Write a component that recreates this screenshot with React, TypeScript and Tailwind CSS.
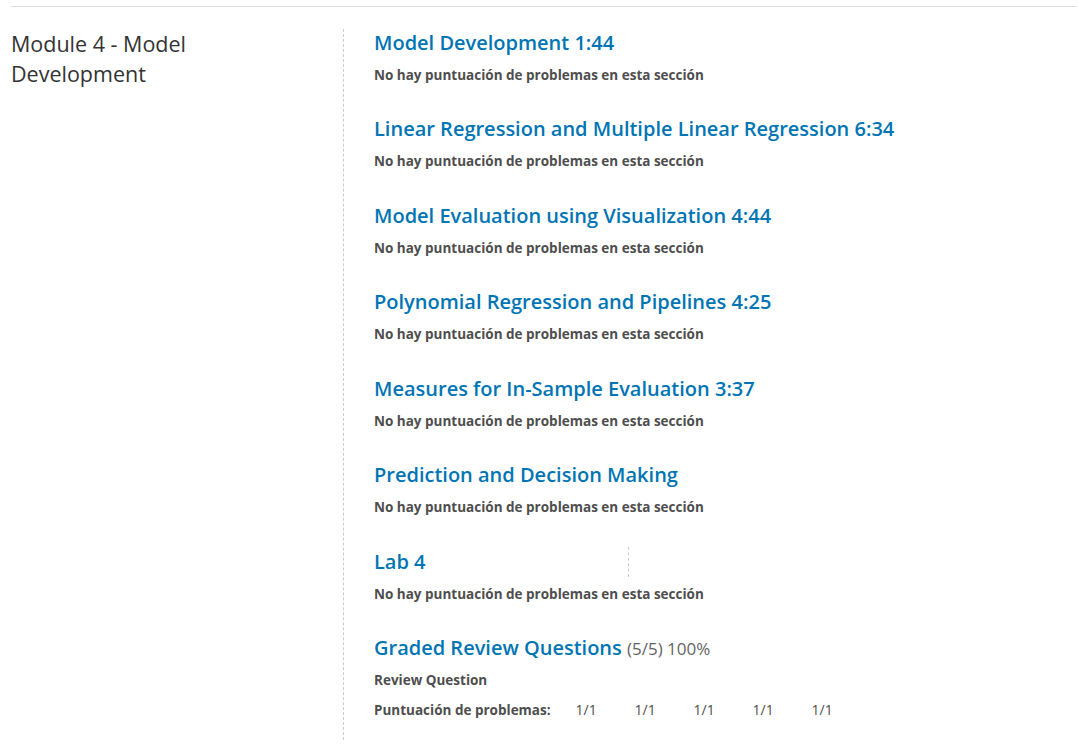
const sections = [
  "Model Development 1:44",
  "Linear Regression and Multiple Linear Regression 6:34",
  "Model Evaluation using Visualization 4:44",
  "Polynomial Regression and Pipelines 4:25",
  "Measures for In-Sample Evaluation 3:37",
  "Prediction and Decision Making",
];

const NoScore = () => (
  <p className="mt-[7px] text-[13.5px] leading-[20px] font-bold text-[#4e4e4e]">
    No hay puntuación de problemas en esta sección
  </p>
);

export default function App() {
  return (
    <div className="min-h-[744px] bg-white font-['Open_Sans',sans-serif]">
      <div className="ml-[11px] mr-[1px] pt-[6px]">
        <div className="flex border-t border-[#dddddd]">
          <div className="w-[332px] shrink-0 pt-[22px]">
            <h2 className="text-[21.5px] leading-[30px] font-normal text-[#333333]">
              Module 4 - Model
              <br />
              Development
            </h2>
          </div>
          <div className="mt-[22px] flex-1 border-l border-dashed border-[#cccccc] pl-[30px]">
            <ol className="-mt-[1px]">
              {sections.map((s) => (
                <li key={s} className="pb-[29.45px]">
                  <h3 className="text-[20px] leading-[30px] font-semibold text-[#0075b4]">{s}</h3>
                  <NoScore />
                </li>
              ))}
              <li className="pb-[29.3px]">
                <div className="flex items-center">
                  <h3 className="w-[255px] border-r border-dashed border-[#cccccc] text-[20px] leading-[30px] font-semibold text-[#0075b4]">
                    Lab 4
                  </h3>
                </div>
                <NoScore />
              </li>
              <li className="pb-[20px]">
                <h3 className="text-[20px] leading-[30px] font-semibold text-[#0075b4]">
                  Graded Review Questions{" "}
                  <span className="text-[17px] font-normal text-[#646464]">(5/5) 100%</span>
                </h3>
                <p className="mt-[6px] text-[13.5px] leading-[20px] font-bold text-[#4e4e4e]">Review Question</p>
                <div className="mt-[10px] flex text-[13.5px] leading-[20px] text-[#4e4e4e]">
                  <span className="mr-[25px] font-bold">Puntuación de problemas:</span>
                  {[0, 1, 2, 3, 4].map((i) => (
                    <span key={i} className="w-[59px] text-[14px]">1/1</span>
                  ))}
                </div>
              </li>
            </ol>
          </div>
        </div>
      </div>
    </div>
  );
}
